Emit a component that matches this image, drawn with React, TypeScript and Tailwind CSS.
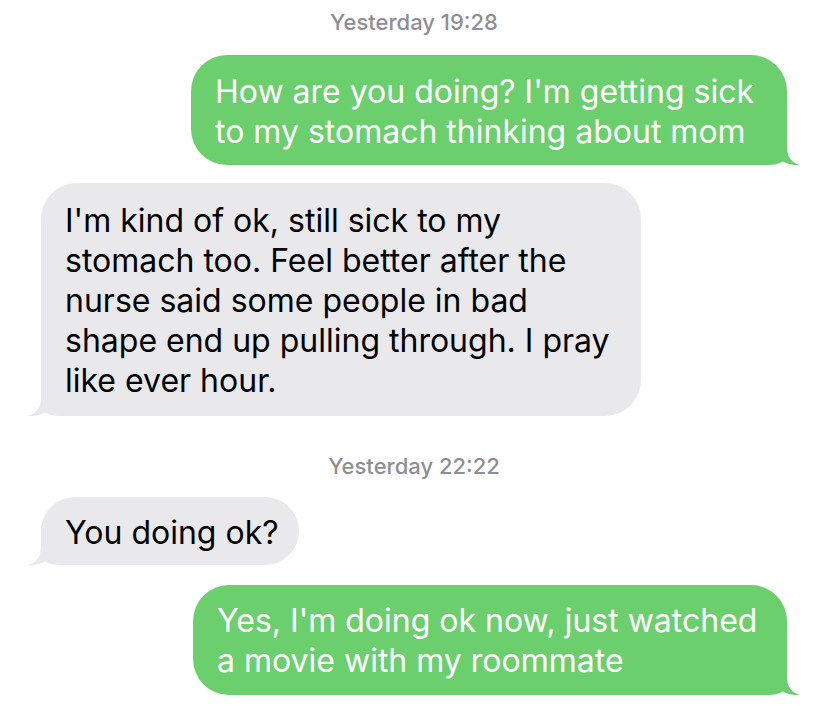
import React from 'react';

type Msg = {
  id: number;
  kind: 'time' | 'in' | 'out';
  lines: string[];
  width?: string;
  pad?: string;
  gap: string;
};

const messages: Msg[] = [
  { id: 1, kind: 'time', lines: ['Yesterday 19:28'], gap: 'mt-[9px]' },
  {
    id: 2,
    kind: 'out',
    lines: ["How are you doing? I'm getting sick", 'to my stomach thinking about mom'],
    width: 'w-[596px]',
    pad: 'pt-[17px] pb-[13px]',
    gap: 'mt-[20px]',
  },
  {
    id: 3,
    kind: 'in',
    lines: [
      "I'm kind of ok, still sick to my",
      'stomach too. Feel better after the',
      'nurse said some people in bad',
      'shape end up pulling through. I pray',
      'like ever hour.',
    ],
    width: 'w-[600px]',
    pad: 'pt-[18px] pb-[15px]',
    gap: 'mt-[18px]',
  },
  { id: 4, kind: 'time', lines: ['Yesterday 22:22'], gap: 'mt-[37px]' },
  {
    id: 5,
    kind: 'in',
    lines: ['You doing ok?'],
    width: 'w-[258px]',
    pad: 'pt-[16px] pb-[12px]',
    gap: 'mt-[18px]',
  },
  {
    id: 6,
    kind: 'out',
    lines: ["Yes, I'm doing ok now, just watched", 'a movie with my roommate'],
    width: 'w-[594px]',
    pad: 'pt-[16px] pb-[14px]',
    gap: 'mt-[20px]',
  },
];

// bubble tail, drawn for the right side; flipped for incoming bubbles
const Tail = ({ color, left }: { color: string; left?: boolean }) => (
  <svg
    width="50"
    height="40"
    viewBox="0 0 50 40"
    className={left ? 'absolute bottom-0 left-[-13px] -scale-x-100' : 'absolute bottom-0 right-[-13px]'}
  >
    <path
      d="M0 0 H37 V22 C37 32 42 38 50 40 C43 40.5 37 39 33 36.5 C29 39 24 40 18 40 H0 Z"
      fill={color}
    />
  </svg>
);

const App = () => {
  return (
    <div className="w-[828px] h-[706px] bg-white overflow-hidden px-[41px] flex flex-col font-['Inter',sans-serif]">
      {messages.map((m) => {
        if (m.kind === 'time') {
          return (
            <div
              key={m.id}
              className={`${m.gap} text-center text-[22px] leading-[26px] font-medium text-[#8e8e93]`}
            >
              {m.lines[0]}
            </div>
          );
        }
        const out = m.kind === 'out';
        return (
          <div key={m.id} className={`${m.gap} flex ${out ? 'justify-end' : 'justify-start'}`}>
            <div
              className={`relative ${m.width} ${m.pad} rounded-[36px] px-[24px] text-[32px] leading-[40px] ${
                out ? 'bg-[#6ccf6e] text-white' : 'bg-[#e9e9eb] text-black'
              }`}
            >
              <Tail color={out ? '#6ccf6e' : '#e9e9eb'} left={!out} />
              <div className="relative whitespace-nowrap">
                {m.lines.map((l, i) => (
                  <div key={i}>{l}</div>
                ))}
              </div>
            </div>
          </div>
        );
      })}
    </div>
  );
};

export default App;
